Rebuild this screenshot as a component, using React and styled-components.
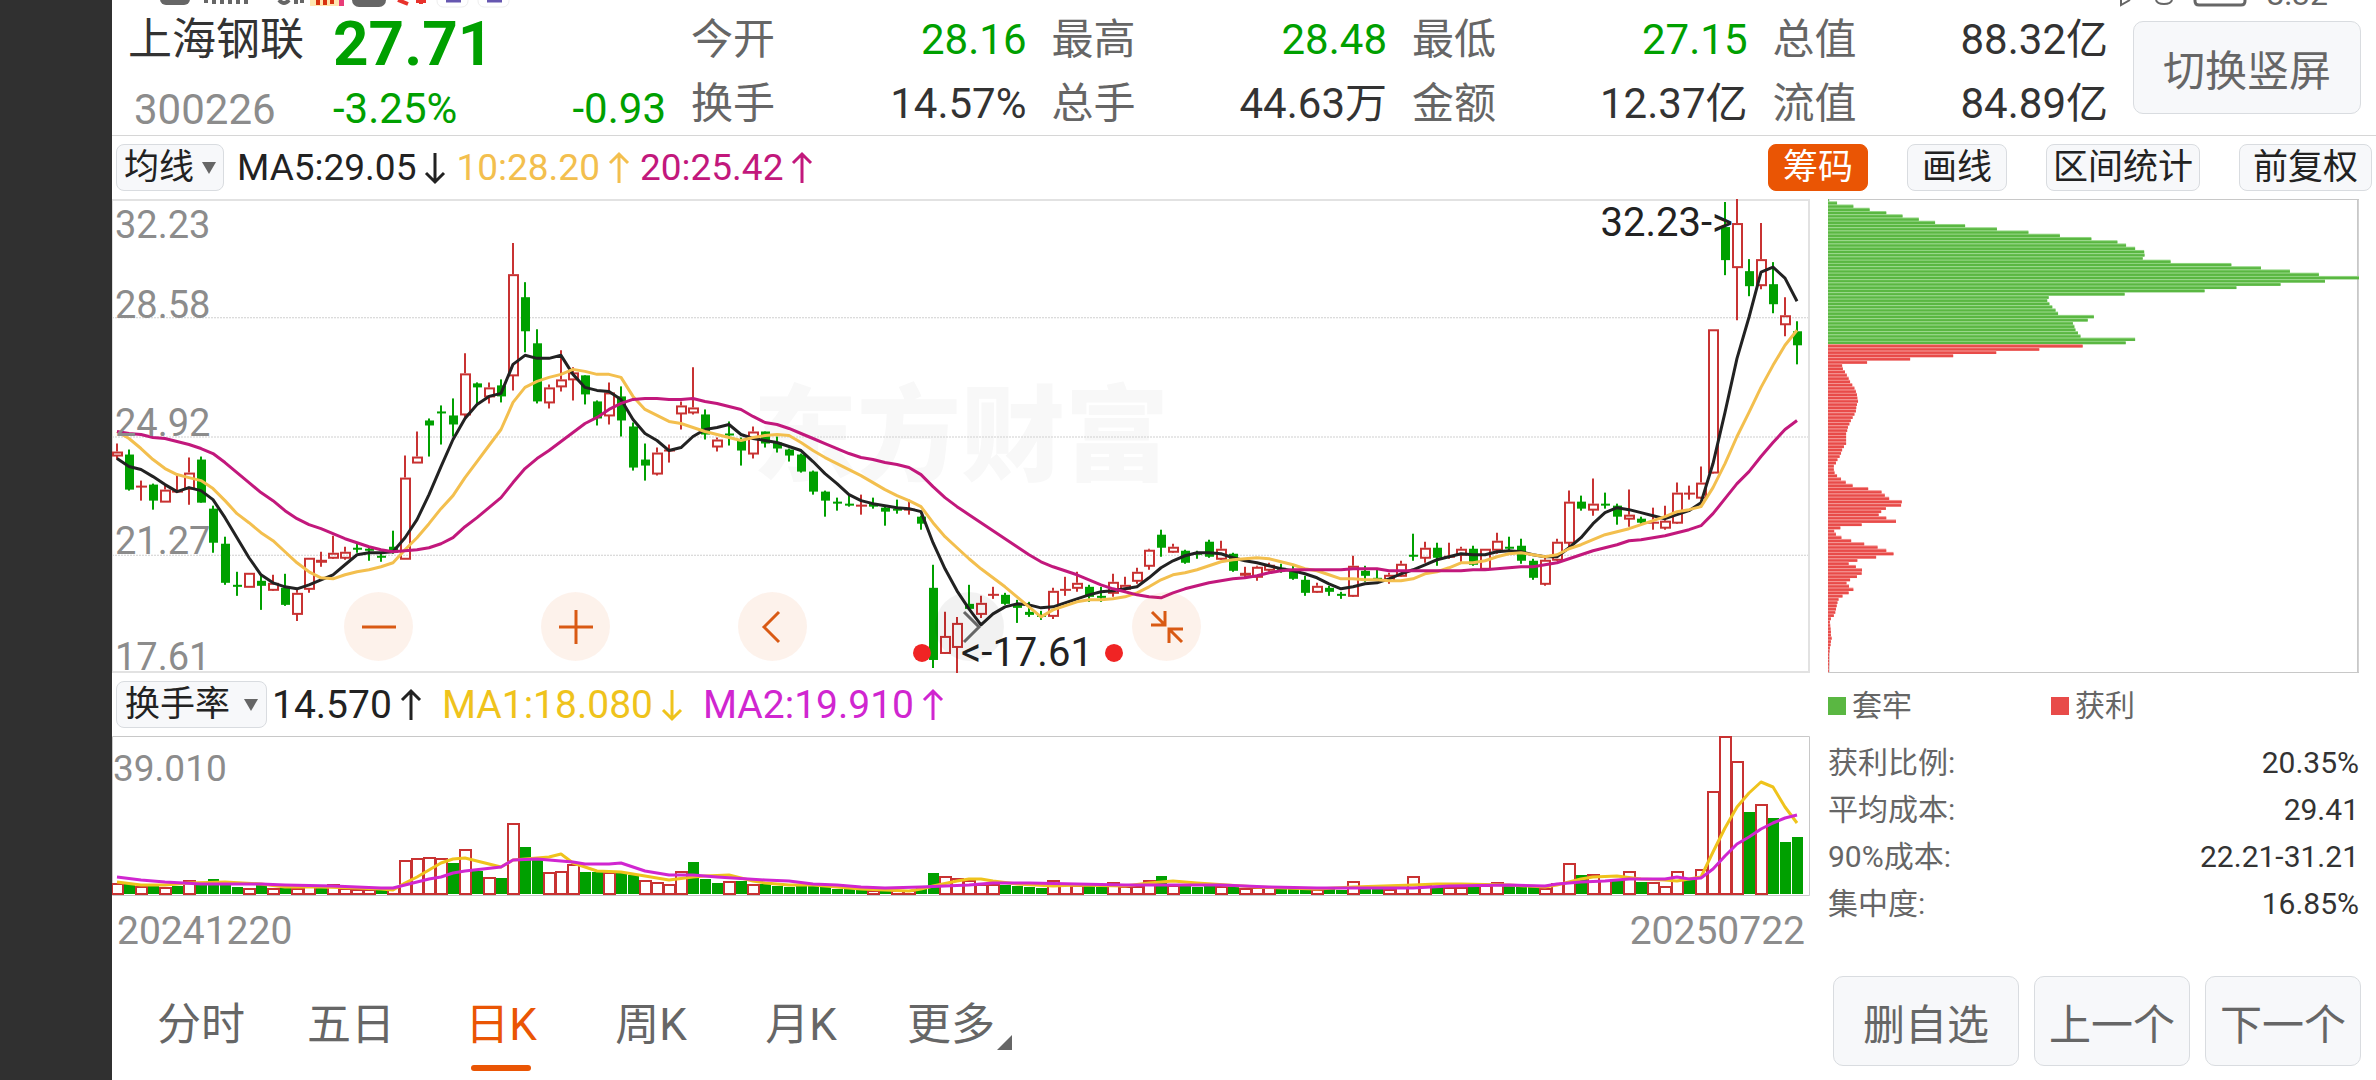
import { useState } from "react";
import styled, { createGlobalStyle, css } from "styled-components";

const COLOR = {
  up: "#c83232",
  down: "#00a000",
  ma5: "#222222",
  ma10: "#f3bf4e",
  ma20: "#c2187c",
  volMa1: "#efc31c",
  volMa2: "#d026d0",
  brand: "#ea5504",
  text: "#333333",
  sub: "#666666",
  muted: "#8c8c8c",
  panel: "#f7f8fa",
  line: "#d9dce0",
  locked: "#5ab742",
  profit: "#e84b49",
};

const STATS = [
  { label: "今开", value: "28.16", down: true },
  { label: "最高", value: "28.48", down: true },
  { label: "最低", value: "27.15", down: true },
  { label: "总值", value: "88.32亿" },
  { label: "换手", value: "14.57%" },
  { label: "总手", value: "44.63万" },
  { label: "金额", value: "12.37亿" },
  { label: "流值", value: "84.89亿" },
];

const COSTS = [
  ["获利比例:", "20.35%"],
  ["平均成本:", "29.41"],
  ["90%成本:", "22.21-31.21"],
  ["集中度:", "16.85%"],
];

const TABS = ["分时", "五日", "日K", "周K", "月K", "更多"];

// high, body top, body bottom, low (distance from the top of the chart)
const CANDLES = `r 244 252 256 260|g 250 255 290 291|r 281 286 287 301|g 284 285 301 310|r 285 290 302 302|r 276 291 293 293|r 258 273 289 305|g 257 260 303 303|g 306 309 343 353|g 337 344 383 385
g 372 385 386 396|r 373 373 387 387|g 374 381 386 410|r 375 383 390 391|g 374 388 405 406|r 389 393 414 421|r 358 358 389 393|r 352 360 363 367|r 336 353 358 359|r 347 352 358 360
g 344 348 350 353|g 347 349 351 361|g 353 356 358 362|g 331 347 353 354|r 256 278 359 359|r 232 257 263 263|g 219 221 226 257|g 206 212 213 245|g 199 216 225 237|r 154 174 215 218
g 183 184 188 206|r 183 188 197 204|g 180 186 197 203|r 44 75 176 191|g 83 98 132 153|g 130 144 202 204|r 185 188 203 209|r 151 180 187 192|r 168 173 180 201|g 176 176 195 205
g 201 202 219 226|r 183 193 216 225|g 187 197 221 237|g 223 227 268 271|g 244 260 266 281|r 248 253 274 276|r 245 250 252 263|r 202 206 214 230|r 168 208 213 215|g 210 215 235 240
r 238 240 247 252|g 222 234 236 246|g 238 240 251 266|r 227 232 254 259|g 232 232 244 248|g 237 243 249 253|g 249 250 256 262|g 254 255 272 273|g 271 272 292 295|g 291 292 301 317
g 298 302 303 311|g 296 304 305 307|r 295 305 307 315|g 298 304 307 309|g 307 308 312 326|g 300 309 311 314|r 300 309 311 315|g 316 317 324 330|g 365 388 460 468|r 412 436 453 454
r 417 423 447 473|g 385 404 409 410|r 396 403 414 418|r 387 394 396 399|g 393 395 404 405|g 400 405 408 423|g 402 412 415 417|g 411 415 417 420|r 388 391 416 419|r 377 389 391 396
r 372 383 388 392|g 385 387 397 402|g 387 396 398 402|r 374 382 393 397|r 377 385 389 391|r 368 372 381 384|r 349 350 366 370|g 330 335 348 357|r 344 347 352 353|g 350 351 363 364
g 351 353 355 359|g 340 342 357 358|r 341 349 359 360|g 353 354 371 372|r 367 373 376 378|r 366 367 377 381|r 363 365 370 372|g 364 368 370 373|g 366 370 379 380|g 376 380 393 396
r 383 386 392 393|g 386 388 392 396|g 392 394 396 399|r 356 366 396 397|g 366 371 376 382|g 370 378 380 380|r 373 375 381 384|r 361 364 376 377|g 334 355 356 361|r 342 348 358 363
g 343 348 358 366|r 343 356 358 359|r 347 349 355 362|g 346 349 365 366|r 349 349 369 370|r 333 341 350 354|g 337 347 349 351|g 339 346 361 364|g 359 361 378 380|r 356 360 384 386
r 339 342 360 361|r 291 302 343 348|g 296 302 309 311|r 279 304 310 316|g 293 304 305 309|g 304 306 317 325|r 290 315 319 327|g 317 319 323 325|r 308 322 324 330|r 306 321 328 330
r 283 293 323 324|r 286 293 295 300|r 267 283 298 299|r 130 130 273 274|g 3 28 61 76|r 0 24 68 121|g 60 72 87 97|r 24 60 86 90|g 63 85 105 114|r 98 116 125 137
g 122 132 146 165`
  .split(/[|\n]/)
  .map((row) => {
    const [kind, ...nums] = row.split(" ");
    const [high, top, bottom, low] = nums.map(Number);
    return { up: kind === "r", high, top, bottom, low };
  });

const MA5 = [
  259, 267, 270, 277, 285, 292, 288, 291, 300, 318, 338, 358, 375, 383, 387,
  389, 385, 380, 375, 365, 355, 353, 353, 352, 338, 320, 295, 267, 240, 219,
  205, 197, 194, 165, 156, 159, 159, 156, 175, 188, 191, 192, 200, 220, 234,
  241, 251, 248, 237, 230, 228, 225, 235, 239, 241, 243, 247, 251, 262, 274,
  284, 295, 301, 304, 306, 308, 309, 312, 343, 369, 391, 409, 425, 414, 407,
  404, 405, 408, 407, 403, 399, 395, 392, 391, 389, 387, 378, 368, 361, 356,
  353, 353, 354, 358, 361, 363, 366, 369, 371, 374, 378, 384, 389, 387, 384,
  383, 379, 374, 370, 365, 360, 357, 354, 355, 355, 352, 351, 352, 355, 357,
  357, 348, 338, 324, 313, 308, 310, 313, 316, 319, 315, 311, 303, 264, 213,
  159, 118, 73, 68, 79, 102,
];

const MA10 = [
  232, 239, 249, 260, 269, 275, 278, 281, 289, 301, 314, 323, 333, 341, 352,
  363, 372, 378, 379, 375, 372, 370, 367, 363, 350, 338, 324, 309, 296, 278,
  262, 246, 230, 203, 188, 182, 178, 175, 170, 172, 175, 175, 178, 197, 210,
  216, 222, 224, 228, 232, 235, 238, 241, 238, 236, 235, 236, 243, 251, 258,
  264, 270, 276, 283, 290, 296, 301, 307, 323, 337, 348, 359, 369, 378, 387,
  397, 407, 417, 410, 406, 402, 400, 400, 399, 397, 393, 387, 380, 375, 373,
  370, 366, 362, 360, 359, 358, 359, 362, 365, 369, 371, 375, 379, 379, 380,
  380, 381, 381, 379, 374, 372, 368, 363, 363, 361, 357, 354, 353, 355, 357,
  355, 349, 345, 340, 335, 332, 329, 325, 321, 317, 312, 310, 307, 288, 264,
  237, 213, 188, 166, 146, 131,
];

const MA20 = [
  232, 234, 235, 238, 239, 242, 245, 249, 254, 263, 273, 283, 293, 301, 311,
  319, 325, 329, 334, 339, 343, 347, 350, 352, 351, 350, 348, 344, 338, 327,
  318, 308, 298, 283, 269, 259, 251, 242, 233, 224, 218, 210, 204, 200, 199,
  199, 200, 200, 199, 202, 204, 207, 210, 217, 223, 225, 229, 234, 239, 244,
  249, 254, 258, 260, 263, 265, 268, 275, 287, 298, 307, 315, 323, 331, 339,
  347, 355, 362, 367, 371, 375, 380, 385, 389, 392, 395, 397, 398, 393, 389,
  386, 383, 381, 379, 378, 376, 373, 371, 370, 370, 370, 370, 370, 369, 369,
  369, 371, 371, 371, 371, 371, 371, 371, 370, 370, 369, 368, 367, 367, 365,
  363, 359, 355, 351, 348, 345, 341, 340, 338, 336, 333, 330, 326, 314, 299,
  284, 272, 257, 243, 230, 221,
];

const TURNOVER =
  `r11 g11 r8 g9 r7 g8 r14 g11 g15 g11 g7 r6 g9 r6 g7 r6 r8 g8 r10 r6
r5 r5 g4 r7 r34 r36 r37 r36 g31 r45 g23 r17 g16 r71 g47 g36 r22 r23 r30 g22
g22 r22 g21 g19 r14 r12 r10 r23 g32 g15 g11 r13 g13 r10 g10 g8 g7 g9 g8 g7
g5 g5 g5 r4 g3 r4 r4 g8 g21 r18 r16 r14 r10 r10 g9 g8 g7 g6 r14 r10
r9 g9 g7 r12 r8 r8 r14 g18 r9 g10 g7 g9 r8 g8 r6 r7 r7 g5 g6 g7
r5 g5 g4 r13 g8 g7 r5 r7 r18 r10 g8 r7 r7 g8 r9 r12 g8 g8 g8 r6
r11 r31 g19 r20 r14 g14 r23 g12 r12 r8 r23 g15 r25 r103 r158 r133 g82 r90 g76 g52 g57`.split(
    /\s+/,
  );

// [bar index, distance from the top of the panel]
const VOL_MA1 = [
  [0, 146], [2, 149], [4, 149], [6, 147], [9, 146], [12, 148], [14, 151],
  [17, 151], [20, 152], [22, 153], [23, 154], [24, 147], [25, 141], [26, 134],
  [27, 127], [28, 123], [29, 122], [30, 125], [32, 131], [33, 124], [34, 123],
  [36, 121], [37, 118], [38, 127], [39, 131], [40, 135], [42, 136], [44, 140],
  [46, 144], [48, 141], [49, 140], [51, 139], [52, 142], [53, 145], [54, 147],
  [56, 149], [58, 149], [60, 151], [62, 153], [64, 154], [66, 155], [67, 153],
  [68, 150], [70, 145], [71, 143], [72, 143], [73, 145], [75, 148], [78, 150],
  [80, 149], [84, 150], [86, 147], [88, 145], [90, 147], [95, 151], [100, 153],
  [103, 151], [108, 149], [110, 148], [112, 148], [116, 149], [119, 151],
  [120, 149], [121, 146], [122, 143], [123, 141], [125, 140], [127, 143],
  [129, 144], [130, 145], [131, 143], [132, 141], [133, 116], [134, 92],
  [135, 71], [136, 57], [137, 46], [138, 51], [139, 71], [140, 87],
];

const VOL_MA2 = [
  [0, 141], [2, 144], [4, 146], [7, 148], [12, 148], [14, 149], [18, 150],
  [20, 151], [22, 152], [23, 152], [24, 149], [26, 143], [27, 141], [28, 137],
  [29, 135], [32, 131], [33, 124], [35, 123], [38, 126], [39, 128], [41, 128],
  [42, 127], [43, 131], [44, 135], [46, 139], [48, 139], [50, 141], [54, 144],
  [56, 145], [58, 148], [60, 149], [62, 151], [64, 152], [67, 151], [69, 150],
  [71, 149], [73, 147], [76, 147], [80, 148], [84, 149], [92, 149], [96, 151],
  [100, 152], [108, 152], [111, 150], [116, 149], [119, 150], [120, 148],
  [122, 146], [124, 145], [126, 143], [129, 143], [130, 141], [131, 143],
  [132, 142], [133, 133], [134, 120], [135, 108], [136, 101], [137, 93],
  [138, 87], [139, 82], [140, 79],
];

const CHIPS_LOCKED = [
  2, 25, 70, 115, 161, 206, 251, 296, 379, 467, 554, 641, 728, 800, 824, 849,
  874, 875, 870, 947, 1115, 1197, 1277, 1357, 1468, 1374, 1251, 1129, 1041,
  820, 610, 606, 612, 620, 629, 636, 735, 718, 677, 681, 684, 691, 698, 849,
  823,
];
const CHIPS_PROFIT = [
  704, 584, 465, 346, 227, 108, 39, 41, 47, 52, 57, 61, 67, 73, 77, 80, 81, 83,
  80, 78, 77, 73, 68, 63, 59, 55, 53, 50, 50, 50, 50, 44, 39, 36, 32, 26, 22,
  16, 16, 18, 25, 36, 49, 68, 111, 148, 157, 169, 204, 202, 160, 147, 140, 161,
  188, 93, 34, 17, 22, 37, 64, 100, 137, 161, 181, 133, 81, 57, 77, 94, 93, 80,
  61, 51, 58, 70, 57, 40, 29, 26, 24, 22, 20, 16, 8, 5, 6, 7, 8, 8, 10, 8, 7,
  5, 4, 3, 3, 3, 3, 2, 2,
];

const STEP = 12;
const barX = (i) => 5 + i * STEP;
const toPoints = (ys) => ys.map((y, i) => `${barX(i)},${y}`).join(" ");
const pairPoints = (pairs) => pairs.map(([i, y]) => `${barX(i)},${y}`).join(" ");

function Candle({ index, up, high, top, bottom, low }) {
  const x = barX(index);
  const h = bottom - top;
  if (!up) {
    return (
      <g fill={COLOR.down}>
        <rect x={x - 1} y={high} width={2} height={low - high} />
        <rect x={x - 4} y={top} width={9} height={Math.max(h, 2)} />
      </g>
    );
  }
  if (h < 4) {
    return (
      <g fill={COLOR.up}>
        <rect x={x - 1} y={high} width={2} height={low - high} />
        <rect x={x - 5} y={top} width={11} height={Math.max(h, 2)} />
      </g>
    );
  }
  return (
    <g fill="none" stroke={COLOR.up} strokeWidth={2}>
      <path d={`M${x} ${high}V${top}M${x} ${bottom}V${low}`} />
      <rect x={x - 4} y={top + 1} width={9} height={h - 1} />
    </g>
  );
}

function PriceChart() {
  return (
    <Plot viewBox="0 0 1698 473" preserveAspectRatio="none">
      {[118, 237, 355].map((y) => (
        <line
          key={y}
          x1="0"
          x2="1698"
          y1={y + 0.5}
          y2={y + 0.5}
          stroke="#cfcfcf"
          strokeDasharray="2 1"
        />
      ))}
      <path d="M0 1H1697V472H0" fill="none" stroke="#e2e2e2" strokeWidth="2" />
      <path d="M0.5 0V473" stroke="#dddddd" />
      {CANDLES.map((c, i) => (
        <Candle key={i} index={i} {...c} />
      ))}
      <g fill="none" strokeWidth="3" strokeLinejoin="round">
        <polyline points={toPoints(MA5)} stroke={COLOR.ma5} />
        <polyline points={toPoints(MA10)} stroke={COLOR.ma10} />
        <polyline points={toPoints(MA20)} stroke={COLOR.ma20} />
      </g>
      <circle cx="810" cy="453" r="9" fill="#f02424" />
      <circle cx="1002" cy="453" r="9" fill="#f02424" />
    </Plot>
  );
}

function TurnoverChart() {
  return (
    <Plot viewBox="0 0 1698 160" preserveAspectRatio="none">
      <path d="M0.5 0.5H1697.5V159.5H0.5Z" fill="none" stroke="#c8c8c8" />
      {TURNOVER.map((bar, i) => {
        const h = Number(bar.slice(1));
        const x = barX(i);
        return bar[0] === "g" ? (
          <rect key={i} x={x - 5} y={158 - h} width={11} height={h} fill={COLOR.down} />
        ) : (
          <rect
            key={i}
            x={x - 5}
            y={159 - h}
            width={11}
            height={Math.max(h - 1, 2)}
            fill="#ffffff"
            stroke={COLOR.up}
            strokeWidth={2}
          />
        );
      })}
      <g fill="none" strokeWidth="3" strokeLinejoin="round">
        <polyline points={pairPoints(VOL_MA1)} stroke={COLOR.volMa1} />
        <polyline points={pairPoints(VOL_MA2)} stroke={COLOR.volMa2} />
      </g>
    </Plot>
  );
}

function ChipChart() {
  const pitch = 3.24;
  const rows = [
    ...CHIPS_LOCKED.map((w) => ({ w, fill: COLOR.locked, gap: "#93d683" })),
    ...CHIPS_PROFIT.map((w) => ({ w, fill: COLOR.profit, gap: "#f48f8d" })),
  ];
  return (
    <Plot viewBox="0 0 1468 473" preserveAspectRatio="none">
      <path
        d="M0 0.5H1468M0 472.5H1468"
        fill="none"
        stroke="#c8c8c8"
      />
      <path d="M2 0V473M1465 0V473" stroke="#c8c8c8" strokeWidth="5" />
      {rows.map(({ w, fill, gap }, i) => (
        <g key={i}>
          <rect x="0" y={i * pitch - 1} width={w} height={pitch} fill={gap} />
          <rect x="0" y={i * pitch} width={w} height={2.4} fill={fill} />
        </g>
      ))}
    </Plot>
  );
}

function Arrow({ down }) {
  return (
    <svg width="22" height="34" viewBox="0 0 22 34" aria-hidden="true">
      <path
        d={down ? "M11 2V31M2 22L11 31L20 22" : "M11 32V3M2 12L11 3L20 12"}
        fill="none"
        stroke="currentColor"
        strokeWidth="3"
      />
    </svg>
  );
}

function Caret() {
  return (
    <svg width="14" height="12" viewBox="0 0 14 12" aria-hidden="true">
      <path d="M0 0H14L7 12Z" fill="#666666" />
    </svg>
  );
}

function StatusIcons() {
  return (
    <StatusBar>
      <svg width="400" height="8" viewBox="0 0 400 8" aria-hidden="true">
        <rect x="16" y="-12" width="30" height="17" rx="6" fill="#666666" />
        <path
          d="M62 0V3M70 0V4M78 0V4M86 0V4M94 0V4M102 0V4"
          stroke="#666666"
          strokeWidth="4"
        />
        <path d="M135 0Q140 6 145 0M152 0V4M158 0V3" stroke="#666666" strokeWidth="4" fill="none" />
        <rect x="166" y="0" width="34" height="6" fill="#ffe6b0" />
        <path d="M174 0V5M181 0V5M188 0V4" stroke="#d8320f" strokeWidth="4" />
        <rect x="195" y="0" width="5" height="6" fill="#e83c78" />
        <rect x="208" y="-20" width="34" height="27" rx="7" fill="#666666" />
        <path d="M254 0L264 4M272 1H282M277 0V4" stroke="#e8322c" strokeWidth="4" />
        <rect x="293" y="-20" width="31" height="27" rx="6" fill="#ffffff" stroke="#eeeeee" />
        <path d="M302 1H317" stroke="#6657b0" strokeWidth="3" />
        <rect x="334" y="-20" width="31" height="27" rx="6" fill="#ffffff" stroke="#eeeeee" />
        <path d="M343 1H358" stroke="#6657b0" strokeWidth="3" />
      </svg>
      <StatusRight>
        <svg width="130" height="8" viewBox="0 0 130 8" aria-hidden="true">
          <g fill="none" stroke="#666666" strokeWidth="2">
            <path d="M3 0V5L12 0" />
            <path d="M38 0Q39 4 46 4Q53 4 54 0" />
            <path d="M77 -4V1Q77 5 81 5H123Q127 5 127 1V-4" strokeWidth="3" />
          </g>
        </svg>
        <Clock>8:32</Clock>
      </StatusRight>
    </StatusBar>
  );
}

export default function App() {
  const [tab, setTab] = useState("日K");

  return (
    <Screen>
      <GlobalStyle />
      <Cutout />
      <Main>
        <Header>
          <StatusIcons />
          <Quote>
            <Identity>
              <StockName>上海钢联</StockName>
              <Price>27.71</Price>
              <Code>300226</Code>
              <Change>
                <span>-3.25%</span>
                <span>-0.93</span>
              </Change>
            </Identity>
            <Stats>
              {STATS.map(({ label, value, down }) => (
                <Stat key={label}>
                  <dt>{label}</dt>
                  <StatValue $down={down}>{value}</StatValue>
                </Stat>
              ))}
            </Stats>
            <RotateButton>切换竖屏</RotateButton>
          </Quote>
        </Header>

        <Toolbar>
          <Picker>
            <select aria-label="主图指标">
              <option>均线</option>
            </select>
            <Caret />
          </Picker>
          <Indicators $gap={10} $size={37}>
            <Reading $color={COLOR.ma5}>
              MA5:29.05 <Arrow down />
            </Reading>
            <Reading $color={COLOR.ma10}>
              10:28.20 <Arrow />
            </Reading>
            <Reading $color={COLOR.ma20}>
              20:25.42 <Arrow />
            </Reading>
          </Indicators>
          <Tools>
            <ToolButton $active>筹码</ToolButton>
            <ToolButton>画线</ToolButton>
            <ToolButton $tight>区间统计</ToolButton>
            <ToolButton>前复权</ToolButton>
          </Tools>
        </Toolbar>

        <Body>
          <Charts>
            <PricePanel>
              <Watermark>东方财富</Watermark>
              <PriceChart />
              <PriceAxis>
                <li>
                  <span>32.23</span>
                  <span>28.58</span>
                </li>
                <li>24.92</li>
                <li>21.27</li>
                <li>17.61</li>
              </PriceAxis>
              <HighMark>32.23-&gt;</HighMark>
              <LowMark>&lt;-17.61</LowMark>
              <ZoomBar>
                <RoundButton aria-label="缩小">
                  <svg width="34" height="34" viewBox="0 0 34 34">
                    <path d="M0 17H34" />
                  </svg>
                </RoundButton>
                <RoundButton aria-label="放大">
                  <svg width="34" height="34" viewBox="0 0 34 34">
                    <path d="M0 17H34M17 0V34" />
                  </svg>
                </RoundButton>
                <RoundButton aria-label="左移">
                  <svg width="34" height="34" viewBox="0 0 34 34">
                    <path d="M23 2L8 17L23 32" />
                  </svg>
                </RoundButton>
                <RoundButton aria-label="右移" $disabled>
                  <svg width="34" height="34" viewBox="0 0 34 34">
                    <path d="M11 2L26 17L11 32" />
                  </svg>
                </RoundButton>
                <RoundButton aria-label="退出全屏">
                  <svg width="34" height="34" viewBox="0 0 34 34">
                    <path d="M2 2L14 14M1 15H15V1M32 32L20 20M19 33V19H33" />
                  </svg>
                </RoundButton>
              </ZoomBar>
            </PricePanel>

            <Toolbar>
              <Picker $wide>
                <select aria-label="副图指标">
                  <option>换手率</option>
                </select>
                <Caret />
              </Picker>
              <Indicators $gap={20} $size={39}>
                <Reading $color={COLOR.ma5}>
                  14.570 <Arrow />
                </Reading>
                <Reading $color={COLOR.volMa1}>
                  MA1:18.080 <Arrow down />
                </Reading>
                <Reading $color={COLOR.volMa2}>
                  MA2:19.910 <Arrow />
                </Reading>
              </Indicators>
            </Toolbar>

            <TurnoverPanel>
              <TurnoverChart />
              <TurnoverMax>39.010</TurnoverMax>
            </TurnoverPanel>
            <Dates>
              <time>20241220</time>
              <time>20250722</time>
            </Dates>
          </Charts>

          <Chips>
            <ChipPanel>
              <ChipChart />
            </ChipPanel>
            <Legend>
              <LegendItem $color={COLOR.locked}>套牢</LegendItem>
              <LegendItem $color={COLOR.profit}>获利</LegendItem>
            </Legend>
            <CostTable>
              <tbody>
                {COSTS.map(([label, value]) => (
                  <tr key={label}>
                    <th scope="row">{label}</th>
                    <td>{value}</td>
                  </tr>
                ))}
              </tbody>
            </CostTable>
          </Chips>
        </Body>

        <Footer>
          <TabList role="tablist">
            {TABS.map((name) => (
              <Tab
                key={name}
                role="tab"
                aria-selected={tab === name}
                $active={tab === name}
                $more={name === "更多"}
                onClick={() => setTab(name)}
              >
                {name}
              </Tab>
            ))}
          </TabList>
          <Actions>
            <ActionButton $wide>删自选</ActionButton>
            <ActionButton>上一个</ActionButton>
            <ActionButton>下一个</ActionButton>
          </Actions>
        </Footer>
      </Main>
    </Screen>
  );
}

const GlobalStyle = createGlobalStyle`
  * {
    box-sizing: border-box;
  }
  body {
    margin: 0;
    background: #ffffff;
    color: ${COLOR.text};
    font-family: Roboto, "Noto Sans CJK SC", sans-serif;
  }
  button, select {
    font-family: inherit;
    cursor: pointer;
  }
  dl, dt, dd, ul, p, h1 {
    margin: 0;
    padding: 0;
  }
`;

const outlined = css`
  border: 1px solid ${COLOR.line};
  background: ${COLOR.panel};
`;

const Screen = styled.div`
  display: flex;
  min-height: 100vh;
`;

const Cutout = styled.div`
  flex: 0 0 112px;
  background: #303030;
`;

const Main = styled.main`
  flex: 1;
  min-width: 0;
  display: flex;
  flex-direction: column;
`;

const Header = styled.header`
  border-bottom: 1px solid #d6d6d6;
`;

const StatusBar = styled.div`
  display: flex;
  justify-content: space-between;
  height: 10px;
  padding: 0 48px 0 32px;
  overflow: hidden;
`;

const StatusRight = styled.div`
  display: flex;
  align-items: flex-end;
  gap: 18px;
  height: 8px;
`;

const Clock = styled.span`
  font-size: 32px;
  line-height: 28px;
  color: ${COLOR.sub};
`;

const Quote = styled.div`
  display: flex;
  gap: 25px;
  padding: 2px 15px 3px 16px;
`;

const Identity = styled.div`
  flex: 0 0 538px;
  display: grid;
  grid-template-columns: 205px 1fr;
  grid-template-rows: 56px 56px;
  row-gap: 8px;
`;

const StockName = styled.h1`
  font-size: 44px;
  font-weight: 400;
  line-height: 56px;
  color: ${COLOR.text};
`;

const Price = styled.strong`
  align-self: end;
  font-size: 62px;
  font-weight: 700;
  line-height: 48px;
  color: ${COLOR.down};
`;

const Code = styled.span`
  align-self: end;
  padding-left: 6px;
  font-size: 42px;
  line-height: 44px;
  color: ${COLOR.muted};
`;

const Change = styled.div`
  align-self: end;
  display: flex;
  justify-content: space-between;
  font-size: 42px;
  line-height: 46px;
  color: ${COLOR.down};
`;

const Stats = styled.dl`
  flex: 1;
  display: grid;
  grid-template-columns: repeat(4, 1fr);
  grid-auto-rows: 56px;
  gap: 8px 25px;
`;

const Stat = styled.div`
  display: flex;
  justify-content: space-between;
  font-size: 42px;
  line-height: 56px;
  color: ${COLOR.sub};
  white-space: nowrap;
`;

const StatValue = styled.dd`
  color: ${({ $down }) => ($down ? COLOR.down : COLOR.text)};
`;

const RotateButton = styled.button`
  flex: 0 0 228px;
  height: 93px;
  margin-top: 9px;
  padding: 0;
  border-radius: 10px;
  ${outlined}
  font-size: 42px;
  color: ${COLOR.sub};
`;

const Toolbar = styled.div`
  display: flex;
  align-items: center;
  height: 63px;
  padding: 0 4px;
`;

const Picker = styled.label`
  display: flex;
  align-items: center;
  justify-content: space-between;
  width: ${({ $wide }) => ($wide ? 151 : 108)}px;
  height: 47px;
  padding: 0 ${({ $wide }) => ($wide ? 8 : 7)}px;
  border-radius: 8px;
  ${outlined}

  select {
    appearance: none;
    padding: 0;
    border: 0;
    background: none;
    font-size: 35px;
    line-height: 44px;
    color: ${COLOR.ma5};
  }
`;

const Indicators = styled.div`
  display: flex;
  align-items: center;
  gap: ${({ $gap }) => $gap}px;
  margin-left: ${({ $gap }) => ($gap > 10 ? 5 : 13)}px;
  font-size: ${({ $size }) => $size}px;
  line-height: 44px;
`;

const Reading = styled.span`
  display: flex;
  align-items: center;
  gap: 8px;
  color: ${({ $color }) => $color};
`;

const Tools = styled.div`
  display: flex;
  gap: 39px;
  margin-left: auto;
`;

const ToolButton = styled.button`
  min-width: 100px;
  height: 47px;
  padding: 0 ${({ $tight }) => ($tight ? 6 : 13)}px;
  border-radius: 8px;
  ${outlined}
  font-size: 35px;
  line-height: 44px;
  color: ${COLOR.ma5};
  white-space: nowrap;
  ${({ $active }) =>
    $active &&
    css`
      border-color: ${COLOR.brand};
      background: ${COLOR.brand};
      color: #ffffff;
    `}
`;

const Body = styled.div`
  display: grid;
  grid-template-columns: minmax(0, 3fr) minmax(0, 1fr);
`;

const Charts = styled.section`
  display: flex;
  flex-direction: column;
`;

const Plot = styled.svg`
  display: block;
  position: relative;
  width: 100%;
  height: 100%;
`;

const PricePanel = styled.div`
  position: relative;
  height: 474px;
`;

const Watermark = styled.div`
  position: absolute;
  inset: 0;
  display: flex;
  align-items: center;
  justify-content: center;
  padding-top: 4px;
  font-size: 104px;
  font-weight: 900;
  line-height: 104px;
  color: #f8f8f8;
`;

const PriceAxis = styled.ul`
  position: absolute;
  inset: 0;
  display: grid;
  grid-template-rows: 120px 118px 118px 1fr;
  padding-left: 3px;
  list-style: none;
  font-size: 38px;
  line-height: 28px;
  color: ${COLOR.muted};
  pointer-events: none;

  li {
    display: flex;
    flex-direction: column;
    justify-content: flex-end;
  }
  li:first-child {
    justify-content: space-between;
    padding-top: 12px;
  }
  li:last-child {
    padding-bottom: 2px;
  }
`;

const HighMark = styled.span`
  position: absolute;
  top: 10px;
  right: 77px;
  font-size: 40px;
  line-height: 28px;
  color: ${COLOR.ma5};
`;

const LowMark = styled.span`
  position: absolute;
  bottom: 6px;
  left: 50%;
  font-size: 40px;
  line-height: 28px;
  color: ${COLOR.ma5};
`;

const ZoomBar = styled.div`
  position: absolute;
  bottom: 12px;
  left: 232px;
  display: flex;
  gap: 128px;
`;

const RoundButton = styled.button`
  display: flex;
  align-items: center;
  justify-content: center;
  width: 69px;
  height: 69px;
  padding: 0;
  border: 0;
  border-radius: 50%;
  background: ${({ $disabled }) =>
    $disabled ? "rgba(0, 0, 0, 0.05)" : "rgba(234, 85, 4, 0.08)"};

  svg {
    fill: none;
    stroke: ${({ $disabled }) => ($disabled ? "#666666" : "#d95a14")};
    stroke-width: 3;
  }
`;

const TurnoverPanel = styled.div`
  position: relative;
  height: 160px;
`;

const TurnoverMax = styled.span`
  position: absolute;
  top: 19px;
  left: 1px;
  font-size: 37px;
  line-height: 28px;
  color: ${COLOR.muted};
`;

const Dates = styled.div`
  display: flex;
  justify-content: space-between;
  padding: 4px 5px 0;
  font-size: 39px;
  line-height: 62px;
  color: ${COLOR.muted};
`;

const Chips = styled.aside`
  padding: 0 17px 0 18px;
`;

const ChipPanel = styled.div`
  height: 474px;
`;

const Legend = styled.div`
  display: grid;
  grid-template-columns: 223px 1fr;
  height: 66px;
`;

const LegendItem = styled.span`
  display: flex;
  align-items: center;
  gap: 6px;
  font-size: 30px;
  line-height: 60px;
  color: ${COLOR.sub};

  &::before {
    content: "";
    width: 18px;
    height: 18px;
    background: ${({ $color }) => $color};
  }
`;

const CostTable = styled.table`
  width: 100%;
  border-collapse: collapse;
  font-size: 30px;
  line-height: 47px;

  th,
  td {
    padding: 0;
    font-weight: 400;
  }
  th {
    text-align: left;
    color: ${COLOR.sub};
  }
  td {
    text-align: right;
    color: ${COLOR.text};
  }
`;

const Footer = styled.footer`
  display: flex;
  align-items: center;
  justify-content: space-between;
  height: 118px;
  padding: 0 15px 0 14px;
`;

const TabList = styled.div`
  display: flex;
`;

const Tab = styled.button`
  position: relative;
  width: 150px;
  height: 118px;
  padding: 0;
  border: 0;
  background: none;
  font-size: 44px;
  color: ${({ $active }) => ($active ? COLOR.brand : COLOR.sub)};

  ${({ $active }) =>
    $active &&
    css`
      &::after {
        content: "";
        position: absolute;
        bottom: 9px;
        left: 45px;
        width: 60px;
        height: 6px;
        border-radius: 3px;
        background: ${COLOR.brand};
      }
    `}
  ${({ $more }) =>
    $more &&
    css`
      &::before {
        content: "";
        position: absolute;
        right: 14px;
        bottom: 30px;
        border-left: 15px solid transparent;
        border-bottom: 15px solid ${COLOR.sub};
      }
    `}
`;

const Actions = styled.div`
  display: flex;
  gap: 15px;
`;

const ActionButton = styled.button`
  width: ${({ $wide }) => ($wide ? 186 : 156)}px;
  height: 90px;
  padding: 0;
  border-radius: 10px;
  ${outlined}
  font-size: 42px;
  color: ${COLOR.sub};
  white-space: nowrap;
`;
